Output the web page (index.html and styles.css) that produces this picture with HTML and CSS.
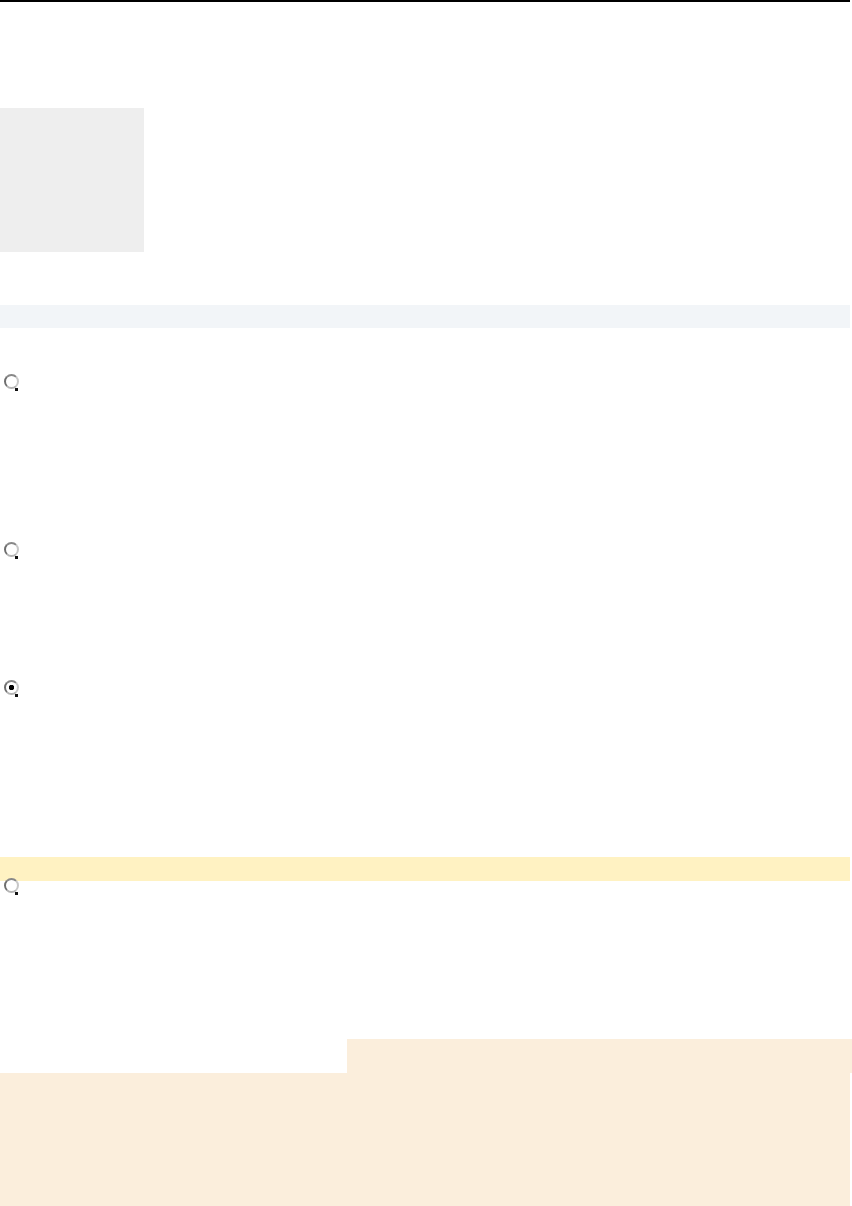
FILE: index.html
```html
<!DOCTYPE html>
<html>
<head>
<meta charset="utf-8">
<link rel="stylesheet" href="styles.css">
</head>
<body>
<div class="topline"></div>
<div class="thumb"></div>
<div class="band band-blue"></div>
<div class="choice choice-1"><input type="radio" name="opt"></div>
<div class="choice choice-2"><input type="radio" name="opt"></div>
<div class="choice choice-3"><input type="radio" name="opt" checked></div>
<div class="band band-yellow"></div>
<div class="choice choice-4"><input type="radio" name="opt2"></div>
<div class="notice">
  <div class="notice-tab"></div>
  <div class="notice-body"></div>
</div>
</body>
</html>
```
FILE: styles.css
```css
html, body {
  margin: 0;
  padding: 0;
  background: #ffffff;
  font-family: "Liberation Sans", Arial, sans-serif;
  overflow: hidden;
}
.topline {
  height: 2px;
  width: 850px;
  background: #000000;
}
.thumb {
  margin-top: 106px;
  width: 144px;
  height: 144px;
  background: #eeeeee;
}
.band {
  width: 850px;
  height: 23px;
}
.band-blue {
  margin-top: 53px;
  background: #f2f5f8;
}
.band-yellow {
  background: #fff2c2;
  height: 24px;
}
.choice {
  height: 15px;
}
.choice input {
  display: block;
  -webkit-appearance: none;
  appearance: none;
  box-sizing: border-box;
  margin: 0 0 0 4px;
  width: 15px;
  height: 15px;
  border-radius: 50%;
  border: 2px solid #c8c8c8;
  border-left-color: #6e6e6e;
  border-top-color: #888888;
  border-bottom-color: #b4b4b4;
  background: #ffffff;
  position: relative;
}
.choice input::after {
  content: "";
  position: absolute;
  right: -1px;
  bottom: -4px;
  width: 3px;
  height: 3px;
  background: #111111;
}
.choice input:checked {
  background: radial-gradient(circle, #000000 0 2.5px, #ffffff 3px);
}
.choice-1 { margin-top: 46px; }
.choice-2 { margin-top: 153px; }
.choice-3 { margin-top: 123px; }
.band-yellow { margin-top: 162px; }
.choice-4 { margin-top: -3px; }
.notice {
  margin-top: 146px;
  width: 852px;
}
.notice-tab {
  margin-left: 347px;
  width: 505px;
  height: 34px;
  background: #fbeedc;
}
.notice-body {
  width: 850px;
  height: 140px;
  background: #fbeedc;
}
```
